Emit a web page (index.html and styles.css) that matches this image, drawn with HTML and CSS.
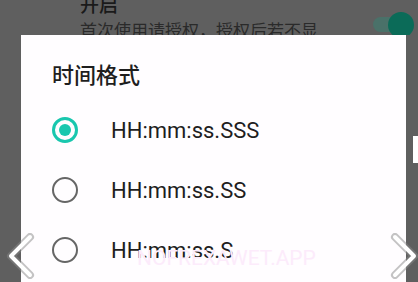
FILE: index.html
```html
<!DOCTYPE html>
<html lang="zh">
<head>
    <meta charset="UTF-8">
    <meta name="viewport" content="width=device-width, initial-scale=1.0">
    <title>时间格式</title>
    <link rel="stylesheet" href="styles.css">
</head>
<body>
    <div class="behind">
        <div class="setting-text">
            <p class="setting-title">开启</p>
            <p class="setting-desc">首次使用请授权，授权后若不显</p>
        </div>
        <div class="switch"><span class="knob"></span></div>
    </div>

    <div class="dialog">
        <h2 class="dialog-title">时间格式</h2>
        <div class="option">
            <span class="radio checked"></span>
            <span class="label">HH:mm:ss.SSS</span>
        </div>
        <div class="option">
            <span class="radio"></span>
            <span class="label">HH:mm:ss.SS</span>
        </div>
        <div class="option">
            <span class="radio"></span>
            <span class="label">HH:mm:ss.S</span>
        </div>
        <div class="watermark">NOFREXAWET.APP</div>
    </div>

    <div class="edge-mark"></div>

    <svg class="nav nav-left" width="30" height="46" viewBox="0 0 30 46">
        <polyline points="24,4 5,23 24,42" fill="none" stroke="#8a8a8a" stroke-width="8" stroke-linecap="round" stroke-linejoin="round" opacity="0.5"/>
        <polyline points="24,4 5,23 24,42" fill="none" stroke="#ffffff" stroke-width="4" stroke-linecap="round" stroke-linejoin="round"/>
    </svg>
    <svg class="nav nav-right" width="30" height="46" viewBox="0 0 30 46">
        <polyline points="6,4 25,23 6,42" fill="none" stroke="#8a8a8a" stroke-width="8" stroke-linecap="round" stroke-linejoin="round" opacity="0.5"/>
        <polyline points="6,4 25,23 6,42" fill="none" stroke="#ffffff" stroke-width="4" stroke-linecap="round" stroke-linejoin="round"/>
    </svg>
</body>
</html>
```

FILE: styles.css
```css
body {
    margin: 0;
    width: 418px;
    height: 282px;
    overflow: hidden;
    background-color: #5f5f5f;
    font-family: Roboto, "Noto Sans CJK SC", sans-serif;
    position: relative;
}
.behind {
    height: 35px;
    overflow: hidden;
    display: flex;
    justify-content: space-between;
    padding-left: 80px;
}
.setting-text {
    margin-top: -5px;
}
.setting-title {
    margin: 0;
    font-size: 19px;
    line-height: 22px;
    font-weight: 500;
    color: #1a1a1a;
}
.setting-desc {
    margin: 3px 0 0;
    font-size: 17px;
    line-height: 22px;
    color: #2a2a2a;
}
.switch {
    position: relative;
    width: 40px;
    height: 15px;
    margin: 17px 5px 0 0;
    border-radius: 8px;
    background-color: #4a7169;
}
.knob {
    position: absolute;
    right: -1px;
    top: -5px;
    width: 26px;
    height: 26px;
    border-radius: 50%;
    background-color: #0b6b58;
}
.dialog {
    margin-left: 21px;
    width: 385px;
    height: 260px;
    background-color: #fffdff;
    padding-top: 26px;
    box-sizing: border-box;
    position: relative;
}
.dialog-title {
    margin: 0 0 9px 31px;
    font-size: 22px;
    line-height: 30px;
    font-weight: 500;
    color: #1e1e1e;
}
.option {
    height: 60px;
    display: flex;
    align-items: center;
    padding-left: 31px;
}
.radio {
    width: 26px;
    height: 26px;
    box-sizing: border-box;
    border: 2px solid #666666;
    border-radius: 50%;
    margin-right: 33px;
    position: relative;
}
.radio.checked {
    border: 3px solid #19c7ae;
}
.radio.checked::after {
    content: "";
    position: absolute;
    left: 4px;
    top: 4px;
    width: 12px;
    height: 12px;
    border-radius: 50%;
    background-color: #19c7ae;
}
.label {
    font-size: 22px;
    color: #1e1e1e;
}
.watermark {
    position: absolute;
    left: 116px;
    top: 211px;
    font-size: 21px;
    color: #fcebfb;
}
.edge-mark {
    position: absolute;
    left: 413px;
    top: 136px;
    width: 5px;
    height: 27px;
    background-color: #ffffff;
}
.nav {
    position: absolute;
    top: 233px;
}
.nav-left {
    left: 6px;
}
.nav-right {
    left: 389px;
}
```
